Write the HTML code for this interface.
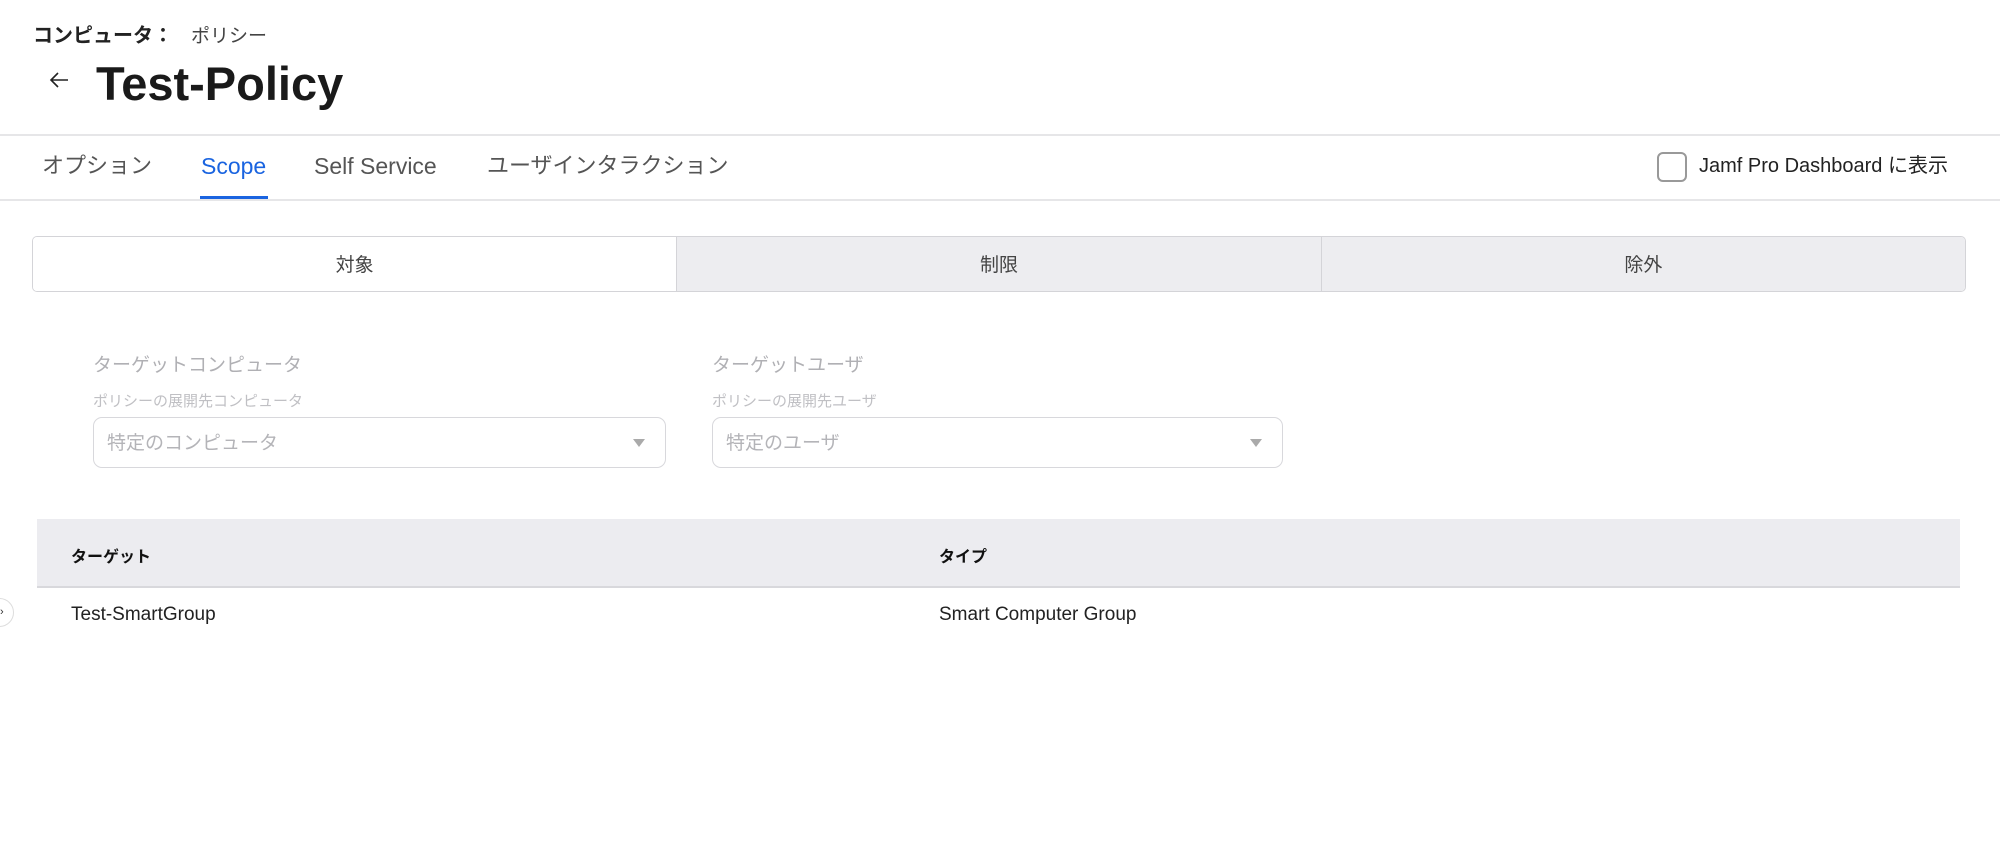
<!DOCTYPE html>
<html><head><meta charset="utf-8"><style>
*{margin:0;padding:0;box-sizing:border-box}
body{width:2000px;height:867px;background:#fff;position:relative;overflow:hidden;font-family:"Liberation Sans","Noto Sans CJK JP",sans-serif;color:#222}
.a{position:absolute;white-space:nowrap}
.hl{position:absolute;left:0;width:2000px;height:2px;background:#e6e6e8}
.tab{position:absolute;top:151px;font-size:22px;color:#555;line-height:30px}
.seg{position:absolute;top:236px;height:56px;border:1px solid #d4d4d8;display:flex;font-size:19px;color:#444;left:32px;width:1934px;border-radius:5px;overflow:hidden}
.seg div{flex:1;text-align:center;line-height:58px;background:#ededf0;border-left:1px solid #d4d4d8}
.seg div:first-child{background:#fff;border-left:none}
.lbl{font-size:19px;color:#b0b0b4}
.sub{font-size:15px;color:#c0c0c4}
.sel{position:absolute;top:417px;height:51px;border:1.5px solid #d8d8dc;border-radius:9px;font-size:19px;color:#b4b4b8;line-height:52px;padding-left:13px}
.tri{position:absolute;right:20px;top:21px;width:0;height:0;border-left:6px solid transparent;border-right:6px solid transparent;border-top:8px solid #aaa}
</style></head><body>
<div class="a" style="left:33px;top:19px;font-size:20px;"><b>コンピュータ：</b><span style="margin-left:18px;color:#444;font-size:19px">ポリシー</span></div>
<svg class="a" style="left:48px;top:70px" width="22" height="20" viewBox="0 0 22 20"><path d="M20 10H3M10 3L3 10l7 7" fill="none" stroke="#222" stroke-width="1.6"/></svg>
<div class="a" style="left:96px;top:55px;font-size:47px;font-weight:bold;color:#1a1a1a;line-height:58px">Test-Policy</div>
<div class="hl" style="top:134px"></div>
<div class="tab" style="left:42px">オプション</div>
<div class="tab" style="left:201px;color:#1a64e0;font-size:23px">Scope</div>
<div class="a" style="left:200px;top:196px;width:68px;height:3px;background:#1a64e0"></div>
<div class="tab" style="left:314px;font-size:23px">Self Service</div>
<div class="tab" style="left:487px">ユーザインタラクション</div>
<div class="a" style="left:1657px;top:152px;width:30px;height:30px;border:2px solid #999;border-radius:6px"></div>
<div class="a" style="left:1699px;top:153px;font-size:20px;color:#222;line-height:26px">Jamf Pro Dashboard に表示</div>
<div class="hl" style="top:199px"></div>
<div class="seg"><div>対象</div><div>制限</div><div>除外</div></div>
<div class="a lbl" style="left:93px;top:350px">ターゲットコンピュータ</div>
<div class="a sub" style="left:93px;top:390px">ポリシーの展開先コンピュータ</div>
<div class="sel" style="left:93px;width:573px">特定のコンピュータ<span class="tri"></span></div>
<div class="a lbl" style="left:712px;top:350px">ターゲットユーザ</div>
<div class="a sub" style="left:712px;top:390px">ポリシーの展開先ユーザ</div>
<div class="sel" style="left:712px;width:571px">特定のユーザ<span class="tri"></span></div>
<div class="a" style="left:37px;top:519px;width:1923px;height:69px;background:#ececf0;border-bottom:2px solid #d8d8dc"></div>
<div class="a" style="left:71px;top:543px;font-size:16px;font-weight:bold;color:#111">ターゲット</div>
<div class="a" style="left:939px;top:543px;font-size:16px;font-weight:bold;color:#111">タイプ</div>
<div class="a" style="left:71px;top:604px;font-size:19px;color:#222">Test-SmartGroup</div>
<div class="a" style="left:939px;top:604px;font-size:19px;color:#222">Smart Computer Group</div>
<div class="a" style="left:-15px;top:598px;width:29px;height:29px;border:1.5px solid #ddd;border-radius:50%;background:#fff"></div>
<div class="a" style="left:0px;top:606px;font-size:11px;color:#333">›</div>
</body></html>
